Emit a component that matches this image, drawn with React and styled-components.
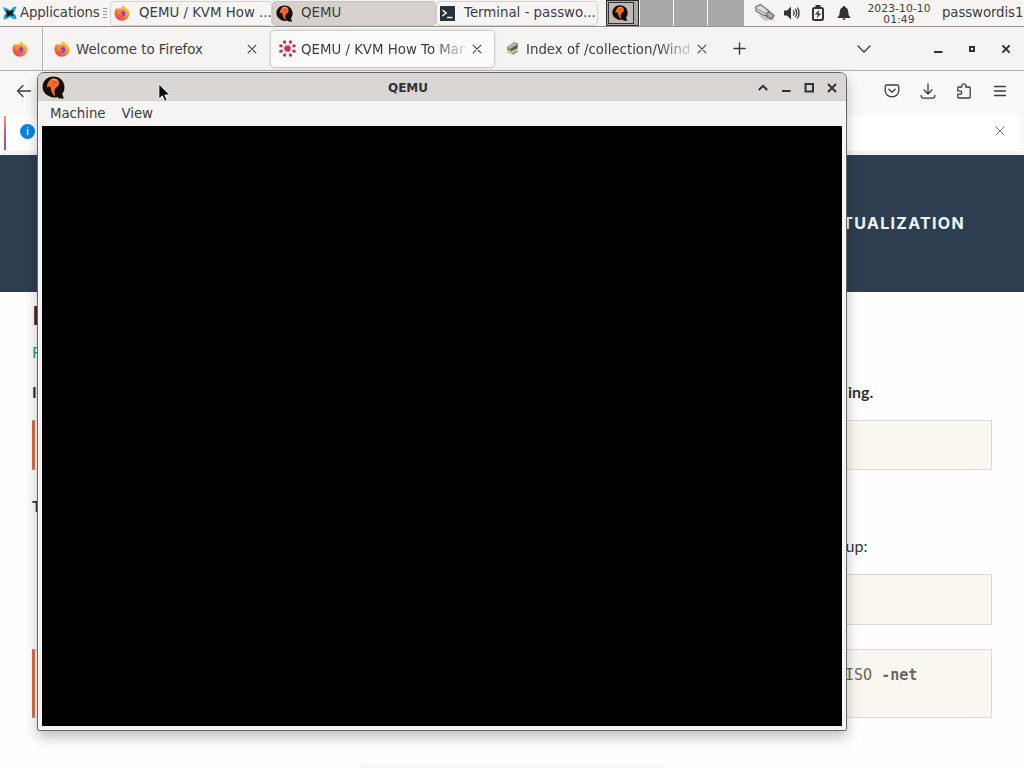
import React from "react";
import styled, { createGlobalStyle } from "styled-components";

const GlobalStyle = createGlobalStyle`
  * { box-sizing: border-box; }
  body {
    margin: 0;
    overflow: hidden;
    font-family: "DejaVu Sans", sans-serif;
    font-size: 13.33px;
    color: #3a3d3f;
  }
  svg { display: block; flex-shrink: 0; }
`;

/* ---------- icons ---------- */

function FirefoxIcon({ size = 16 }) {
  return (
    <svg width={size} height={size} viewBox="0 0 16 16">
      <defs>
        <linearGradient id="fx" x1="0.85" y1="0" x2="0.2" y2="1">
          <stop offset="0" stopColor="#ffe14a" />
          <stop offset="0.45" stopColor="#ff9430" />
          <stop offset="1" stopColor="#f0325a" />
        </linearGradient>
      </defs>
      <path d="M9.6 0.3c1.2.8 1.8 1.8 2 2.8 1-.1 1.5.3 2 1 .9 1.2 1.9 2.5 1.9 4.3A7.500 7.300 0 0 1 .5 8.500C.5 6.400 1.200 4.300 2.500 2.700l.4 1.300 1.500-.7c1 .1 1.800.3 2.500.8.300-1.600 1.200-3 2.700-3.800z" fill="url(#fx)" />
      <circle cx="8" cy="8.400" r="3.200" fill="#7a48d8" />
      <path d="M2.500 5.500c1.700-1.400 3.700-1.200 5 .2l1.700.2c-.3 1-1.800 1.200-2.400 1.700-.3 1.500 1 2.300 2.500 1.900-1.400 1.600-4.200 1.300-5-1z" fill="#ff8a35" />
    </svg>
  );
}

function QemuIcon({ size = 18 }) {
  return (
    <svg width={size} height={size} viewBox="0 0 22 22">
      <path d="M11 .5C17 .5 21.500 5 21.500 10.800c0 2.700-.8 4.700-2.200 6.500l1.700 4.200h-5l-1-1.400C13 21 9 21 6 19 2.500 17 .5 14 .5 10.500.5 5 5 .5 11 .5z" fill="#120f0e" />
      <path d="M5.500 7C6.500 4 9 2.600 12 2.700c3 .1 4.700 2.300 4.400 5-.3 2.300-2.600 3-3.600 4.300-1 1.500-1 3.500-.2 7.500-2.300-1.700-4.100-4.500-4.400-8.600C7.600 9.700 6.400 9.500 5 11c-.4-1.500 0-2.800.5-4z" fill="#f26a24" />
      <path d="M7.500 4C10 1.500 14.500 2 16 5.200c-2.700-1.400-5.500-1.700-8.500-1.200z" fill="#cfa582" />
      <circle cx="12" cy="6.300" r=".6" fill="#201512" />
    </svg>
  );
}

function XfceIcon() {
  return (
    <svg width="14" height="14" viewBox="0 0 14 14">
      <path d="M0 1l4.500 1.500L7 4.500 10.500 1 13.500.5 12 4.500l-1.500 2.300 2.500 3 .5 3.700-4-1-2.500-1.700L3.500 13 .5 13.500 1 10l2-3-2-3z" fill="#17a3d3" />
      <path d="M2.500 4.500c1.500-.6 2.700.2 4 .7 1.500-1 3-1.300 4.500-.2l-1.600 2 1 2.600c-1.300.5-2.300-.1-3.300-.3L4.500 10.800 3 10.500l1.200-3z" fill="#10191d" />
    </svg>
  );
}

function TerminalIcon() {
  return (
    <svg width="15" height="15" viewBox="0 0 15 15">
      <rect width="15" height="15" rx=".5" fill="#26323a" />
      <path d="M2.500 4l3.600 3-3.600 3M7 11.500h5.500" fill="none" stroke="#fff" strokeWidth="1.500" />
    </svg>
  );
}

function HubIcon() {
  const dots = [[5.2, 1.8], [10.8, 1.8], [1.8, 5.5], [14.2, 5.5], [1.8, 10.5], [14.2, 10.5], [5.2, 14.2], [10.8, 14.2]];
  return (
    <svg width="17" height="17" viewBox="0 0 16 16">
      {dots.map(([x, y]) => (
        <g key={x + "-" + y}>
          <path d={`M8 8L${x} ${y}`} stroke="#df8d9d" strokeWidth=".8" />
          <circle cx={x} cy={y} r="1.600" fill="#d12d4c" />
        </g>
      ))}
      <circle cx="8" cy="8" r="2.900" fill="#d12d4c" />
    </svg>
  );
}

function ArchiveIcon() {
  return (
    <svg width="14" height="15" viewBox="0 0 14 15">
      <path d="M1 6l7-5 4 1.500v5L5 11 1 9z" fill="#8c967a" />
      <path d="M2 6l6-4 2.500 1L4.500 7z" fill="#bcc5a8" />
      <path d="M5 7.500l6-3.500v3l-6 3.500z" fill="#59624e" />
      <path d="M4.500 12.500l6-3.500 2 1-5 4z" fill="#a39d80" />
      <path d="M1.500 11.500l4-.8" stroke="#c8b95e" strokeWidth="1.500" />
    </svg>
  );
}

function Glyph({ d, size = 16, width = 1.3, color = "#3b3b3b" }) {
  return (
    <svg width={size} height={size} viewBox="0 0 16 16" fill="none" stroke={color} strokeWidth={width} strokeLinecap="round" strokeLinejoin="round">
      <path d={d} />
    </svg>
  );
}

const CLOSE = "M3.500 3.500l9 9M12.500 3.500l-9 9";

function WinButton({ kind }) {
  return (
    <svg width="12" height="12" viewBox="0 0 12 12" fill="none" stroke="#2e3235" strokeWidth="2">
      {kind === "shade" && <path d="M1.800 8L6 3.800 10.200 8" />}
      {kind === "min" && <path d="M2 9h8.500" />}
      {kind === "max" && <rect x="2.500" y="2" width="7.500" height="7.500" />}
      {kind === "small" && <rect x="4" y="4" width="4" height="4" />}
      {kind === "close" && <path d="M2 2l8 8M10 2l-8 8" />}
      {kind === "closeSmall" && <path d="M2.400 2.400l7.200 7.200M9.600 2.400L2.400 9.600" />}
    </svg>
  );
}

/* ---------- panel ---------- */

function Panel() {
  return (
    <PanelStyled>
      <AppMenu>
        <XfceIcon />
        <span>Applications</span>
        <Handle><i /><i /><i /><i /></Handle>
      </AppMenu>
      <TaskButton $width={162} $gap={9}>
        <FirefoxIcon size={16} />
        <span>QEMU / KVM How ...</span>
      </TaskButton>
      <TaskButton $width={164} $gap={8} $active>
        <QemuIcon size={17} />
        <span>QEMU</span>
      </TaskButton>
      <TaskButton $width={162} $gap={9}>
        <TerminalIcon />
        <span>Terminal - passwo...</span>
      </TaskButton>
      <Pager>
        <Workspace $current $width={33}>
          <MiniWindow><QemuIcon size={16} /></MiniWindow>
        </Workspace>
        <Workspace $width={33} />
        <Workspace $width={33} />
        <Workspace $width={36} />
      </Pager>
      <Tray>
        <svg width="22" height="20" viewBox="0 0 22 20">
          <path d="M4 12l7 6 9-1-3-4z" fill="#c9c7c5" />
          <path d="M1.500 4L6.500 1.500 15 8l-2 5-5.500-1.500L2 8z" fill="#dddbd9" stroke="#6b6966" strokeWidth="1.100" />
          <path d="M2.500 5.500l8.500 5 3-2" fill="none" stroke="#8e8b87" />
          <path d="M12.500 11l3-2.500 5 4-2.500 3.500-5-2z" fill="#aaa7a3" stroke="#55524f" strokeWidth="1" />
        </svg>
        <svg width="18" height="16" viewBox="0 0 18 16">
          <path d="M1 5.500h3L8 1.500v13l-4-4H1z" fill="#2e3436" />
          <path d="M10.300 5.500q1.600 2.500 0 5M12.300 3.800q2.800 4.200 0 8.400M14.300 2.500q3.600 5.500 0 11" fill="none" stroke="#2e3436" strokeWidth="1.300" />
        </svg>
        <svg width="14" height="16" viewBox="0 0 14 16">
          <rect x="2" y="3" width="10" height="12" rx="1.500" fill="none" stroke="#2e3436" strokeWidth="2" />
          <rect x="4.500" y="0" width="5" height="3" fill="#2e3436" />
          <path d="M8.500 4.500L3.800 9.500H7l-1.500 4 4.700-5H7.300z" fill="#2e3436" />
        </svg>
        <svg width="14" height="16" viewBox="0 0 14 16">
          <path d="M7 1c.8 0 1.200.5 1.200 1.200C10.500 3 11.300 5 11.300 7.500c0 2.500.7 3.500 2 4.500v1H.7v-1c1.300-1 2-2 2-4.500C2.700 5 3.500 3 5.800 2.200 5.800 1.500 6.200 1 7 1zM5.500 13.500h3c0 2-3 2-3 0z" fill="#2e3436" />
        </svg>
      </Tray>
      <Clock>
        <span>2023-10-10</span>
        <span>01:49</span>
      </Clock>
      <UserName>passwordis1</UserName>
    </PanelStyled>
  );
}

/* ---------- browser ---------- */

function Browser() {
  return (
    <BrowserStyled>
      <TabStrip>
        <PinnedTab><FirefoxIcon /></PinnedTab>
        <Tab $width={228}>
          <FirefoxIcon />
          <TabTitle>Welcome to Firefox</TabTitle>
          <Glyph d={CLOSE} size={14} width={1.2} />
        </Tab>
        <Tab $width={223} $active>
          <HubIcon />
          <TabTitle $fade>QEMU / KVM How To Man</TabTitle>
          <Glyph d={CLOSE} size={14} width={1.2} />
        </Tab>
        <Tab $width={227} $last>
          <ArchiveIcon />
          <TabTitle $fade>Index of /collection/Wind</TabTitle>
          <Glyph d={CLOSE} size={14} width={1.2} />
        </Tab>
        <NewTab><Glyph d="M8 2v12M2 8h12" size={15} width={1.5} /></NewTab>
        <ListTabs><Glyph d="M2 5l6 6 6-6" width={1.4} /></ListTabs>
        <WindowControls>
          <WinButton kind="min" />
          <WinButton kind="small" />
          <WinButton kind="closeSmall" />
        </WindowControls>
      </TabStrip>
      <Toolbar>
        <Glyph d="M14.500 8h-13M7 2.500L1.500 8 7 13.500" />
        <ToolbarRight>
          <Glyph d="M2.500 2h11a1.300 1.300 0 0 1 1.300 1.300V7.500a6.800 6.300 0 0 1-13.600 0V3.300A1.300 1.300 0 0 1 2.500 2zM4.800 6.300L8 9.300l3.200-3" width={1.3} />
          <Glyph d="M8 .8v10M4 7l4 4 4-4M1.200 12.300v1a1.800 1.800 0 0 0 1.800 1.800h10a1.800 1.800 0 0 0 1.800-1.800v-1" width={1.3} />
          <Glyph d="M2.800 4h3V2.800a2 2 0 0 1 4 0V4h3.400a1 1 0 0 1 1 1v9a1 1 0 0 1-1 1H2.800a1 1 0 0 1-1-1v-2.800H4a1.700 1.700 0 0 0 0-3.400H1.800V5a1 1 0 0 1 1-1z" width={1.3} />
          <Glyph d="M2.500 3.500h11M2.500 8h11M2.500 12.500h11" width={1.3} />
        </ToolbarRight>
      </Toolbar>
      <InfoBar>
        <InfoBadge>i</InfoBadge>
        <Glyph d={CLOSE} size={14} width={1} color="#5b5b66" />
      </InfoBar>
      <SiteHeader>VIRTUALIZATION</SiteHeader>
      <Article>
        <Heading>I</Heading>
        <Category>F</Category>
        <Line $bold $height={53} $leading={50}><span>I</span><span>ing.</span></Line>
        <CodeBlock $height={50} $accent />
        <Line $bold $height={62} $leading={72}><span>T</span></Line>
        <Line $height={42} $leading={28}><span /><span>up:</span></Line>
        <CodeBlock $height={51} $indent />
        <CodeBlock $height={69} $accent $after>
          ISO <b>-net</b>
        </CodeBlock>
      </Article>
    </BrowserStyled>
  );
}

function QemuWindow() {
  return (
    <WindowStyled>
      <TitleBar>
        <QemuIcon size={23} />
        <b>QEMU</b>
        <TitleButtons>
          <WinButton kind="shade" />
          <WinButton kind="min" />
          <WinButton kind="max" />
          <WinButton kind="close" />
        </TitleButtons>
      </TitleBar>
      <MenuBar>
        <span>Machine</span>
        <span>View</span>
      </MenuBar>
      <Screen />
    </WindowStyled>
  );
}

function App() {
  return (
    <Desktop>
      <GlobalStyle />
      <Panel />
      <Browser />
      <QemuWindow />
      <StatusHint />
      <Cursor width="13" height="20" viewBox="0 0 13 20">
        <path d="M.8 1v15.200l3.600-3.300 2.300 5.500 2.500-1.100-2.300-5.300h5z" fill="#0c0c0c" stroke="#fff" strokeWidth="1" />
      </Cursor>
    </Desktop>
  );
}

const Desktop = styled.div`
  position: relative;
  display: flex;
  flex-direction: column;
  width: 1024px;
  height: 768px;
  overflow: hidden;
  background: #fefefe;
`;

const PanelStyled = styled.div`
  display: flex;
  align-items: center;
  height: 27px;
  flex-shrink: 0;
  background: #f6f5f4;
  border-bottom: 1px solid #96938f;
  white-space: nowrap;
`;

const AppMenu = styled.div`
  display: flex;
  align-items: center;
  width: 110px;
  padding-left: 3px;
  gap: 3px;
  span {
    width: 80px;
    padding-bottom: 2px;
    letter-spacing: -0.15px;
  }
`;

const Handle = styled.div`
  display: flex;
  flex-direction: column;
  gap: 2px;
  i {
    width: 4px;
    height: 1px;
    background: #9b9895;
  }
`;

const TaskButton = styled.div`
  display: flex;
  align-items: center;
  gap: ${(p) => p.$gap}px;
  width: ${(p) => p.$width}px;
  height: 25px;
  padding-left: 3px;
  border: 1px solid ${(p) => (p.$active ? "#c9c4bf" : "#d5d1cd")};
  border-radius: 4px;
  background: ${(p) => (p.$active ? "#d6d1cd" : "#f6f5f3")};
  span { padding-bottom: 2px; }
`;

const Pager = styled.div`
  display: flex;
  gap: 1px;
  margin-left: 8px;
  height: 26px;
`;

const Workspace = styled.div`
  display: flex;
  width: ${(p) => p.$width}px;
  padding: 1px;
  background: ${(p) => (p.$current ? "#a9a9a8" : "#a9a9a8")};
  border: ${(p) => (p.$current ? "1px solid #292929" : "none")};
`;

const MiniWindow = styled.div`
  display: flex;
  align-items: center;
  justify-content: center;
  width: 26px;
  height: 22px;
  padding-right: 2px;
  background: #bdb9b6;
  border: 1px solid #333;
`;

const Tray = styled.div`
  display: flex;
  align-items: center;
  gap: 10px;
  width: 123px;
  padding-left: 10px;
  svg:first-child { margin-right: -3px; }
  svg:last-child { margin-left: 2px; }
`;

const Clock = styled.div`
  display: flex;
  flex-direction: column;
  align-items: center;
  width: 64px;
  margin-right: 11px;
  padding-top: 1px;
  font-size: 10.7px;
  line-height: 11px;
  letter-spacing: 0.1px;
`;

const UserName = styled.span`
  padding-bottom: 1px;
  letter-spacing: -0.1px;
`;

const BrowserStyled = styled.div`
  display: flex;
  flex-direction: column;
  flex: 1;
`;

const TabStrip = styled.div`
  display: flex;
  align-items: center;
  height: 44px;
  background: #f5f4f2;
  border-bottom: 1px solid #b3b0ad;
`;

const PinnedTab = styled.div`
  display: flex;
  align-items: center;
  justify-content: center;
  width: 43px;
  height: 43px;
  padding-right: 3px;
  border-right: 1px solid #b5b3b0;
`;

const Tab = styled.div`
  display: flex;
  align-items: center;
  gap: ${(p) => (p.$active ? 5 : 6)}px;
  width: ${(p) => p.$width}px;
  height: 36px;
  padding: 0 ${(p) => (p.$active ? 10 : 12)}px 0 ${(p) => (p.$active ? 8 : p.$last ? 12 : 11)}px;
  border-radius: 4px;
  background: ${(p) => (p.$active ? "#fbfbfa" : "transparent")};
  box-shadow: ${(p) => (p.$active ? "0 0 3px rgba(0, 0, 0, 0.4)" : "none")};
`;

const TabTitle = styled.span`
  flex: 1;
  padding-top: 1px;
  overflow: hidden;
  white-space: nowrap;
  mask-image: ${(p) => (p.$fade ? "linear-gradient(to left, rgba(0, 0, 0, 0.25) 2px, #000 32px)" : "none")};
`;

const NewTab = styled.div`
  margin-left: 11px;
`;

const ListTabs = styled.div`
  margin-left: 109px;
`;

const WindowControls = styled.div`
  display: flex;
  gap: 22px;
  margin-left: 60px;
`;

const Toolbar = styled.div`
  display: flex;
  align-items: center;
  justify-content: space-between;
  height: 45px;
  padding: 0 16px 5px;
  background: #f9f9f8;
`;

const ToolbarRight = styled.div`
  display: flex;
  gap: 20px;
`;

const InfoBar = styled.div`
  display: flex;
  align-items: center;
  justify-content: space-between;
  height: 39px;
  padding: 0 13px 5px 16px;
  border-left: 4px solid #f9f9f8;
  border-right: 4px solid #f9f9f8;
  border-bottom: 4px solid #eef3f1;
  background:
    linear-gradient(#f39a6c, #d54f8d 50%, #8b4fd5) 0 0 / 2px 34px no-repeat,
    #fff;
`;

const InfoBadge = styled.div`
  width: 15px;
  height: 15px;
  border-radius: 50%;
  background: #0a84e0;
  color: #fff;
  font-size: 11px;
  line-height: 15px;
  text-align: center;
`;

const SiteHeader = styled.div`
  height: 137px;
  padding-right: 59px;
  background: #2d3e50;
  color: #edf8ff;
  font-family: Inter, sans-serif;
  font-weight: 700;
  font-size: 16px;
  letter-spacing: 1.3px;
  line-height: 137px;
  text-align: right;
`;

const Article = styled.div`
  padding: 0 32px;
  color: #2e3236;
  font-family: Lato, sans-serif;
  font-size: 16px;
`;

const Heading = styled.div`
  height: 45px;
  font-size: 27px;
  font-weight: 700;
  line-height: 46px;
`;

const Category = styled.div`
  height: 30px;
  color: #1fa184;
  line-height: 30px;
`;

const Line = styled.div`
  display: grid;
  grid-template-columns: ${(p) => (p.$bold ? 816 : 813.5)}px auto;
  height: ${(p) => p.$height}px;
  font-weight: ${(p) => (p.$bold ? 700 : 400)};
  line-height: ${(p) => p.$leading}px;
`;

const CodeBlock = styled.div`
  height: ${(p) => p.$height}px;
  margin-top: ${(p) => (p.$after ? 24 : 0)}px;
  margin-left: ${(p) => (p.$indent ? 20 : 0)}px;
  padding: 16px 0 0 810px;
  border: 1px solid #dcdad6;
  border-left: ${(p) => (p.$accent ? "3px solid #d0714a" : "none")};
  background: #faf7f0;
  color: #686661;
  font-family: "DejaVu Sans Mono", monospace;
  font-size: 15px;
`;

const WindowStyled = styled.div`
  position: absolute;
  left: 37px;
  top: 72px;
  width: 810px;
  height: 659px;
  display: flex;
  flex-direction: column;
  background: #f6f5f4;
  border: 1px solid #686664;
  border-radius: 7px 7px 2px 2px;
  box-shadow: 0 6px 13px rgba(0, 0, 0, 0.25);
  overflow: hidden;
`;

const TitleBar = styled.div`
  display: flex;
  align-items: center;
  justify-content: space-between;
  height: 28px;
  padding: 2px 8px 0 4px;
  background: #d9d6d3;
  border-bottom: 1px solid #d0ccc8;
  color: #2e3235;
  font-size: 12px;
  b { margin-right: 6px; }
`;

const TitleButtons = styled.div`
  display: flex;
  gap: 11px;
`;

const MenuBar = styled.div`
  display: flex;
  align-items: center;
  gap: 16px;
  height: 25px;
  padding-left: 12px;
  letter-spacing: -0.05px;
`;

const Screen = styled.div`
  height: 600px;
  margin: 0 4px;
  background: #000;
`;

const StatusHint = styled.div`
  position: absolute;
  left: 360px;
  bottom: 0;
  width: 307px;
  height: 4px;
  border-radius: 4px 4px 0 0;
  background: #f7f7f7;
`;

const Cursor = styled.svg`
  position: absolute;
  left: 158px;
  top: 83px;
`;

export default App;
